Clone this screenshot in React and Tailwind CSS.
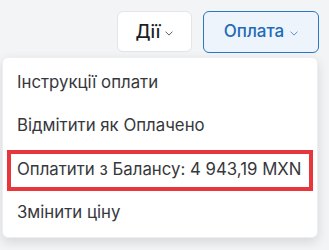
import React from "react";

function Chevron({ className }) {
  return (
    <svg viewBox="0 0 10 6" width="8" height="5" className={className} fill="none" stroke="currentColor" strokeWidth="1.2" strokeLinecap="round" strokeLinejoin="round">
      <path d="M1 1l4 4 4-4" />
    </svg>
  );
}

export default function App() {
  const items = [
    "Інструкції оплати",
    "Відмітити як Оплачено",
    "Оплатити з Балансу: 4 943,19 MXN",
    "Змінити ціну",
  ];
  return (
    <div className="w-[329px] h-[250px] overflow-hidden bg-[#f3f4f6] relative" style={{ fontFamily: "Inter, 'Noto Sans', sans-serif" }}>
      <div className="flex justify-end gap-[11px] pt-[11px] pr-[10px]">
        <button className="h-[41px] w-[75px] flex items-center justify-center gap-[5px] rounded-[6px] border border-[#e3e5e8] bg-white text-[18px] font-medium text-[#1d1f23]">
          <span>Дії</span>
          <Chevron className="text-[#555] mt-[3px]" />
        </button>
        <button className="h-[42px] w-[116px] flex items-center justify-center gap-[6px] rounded-[6px] border-[1.5px] border-[#2a78c4] bg-[#eef4fb] text-[17px] font-medium text-[#1e6bb8]">
          <span>Оплата</span>
          <Chevron className="text-[#5a8cc4] mt-[3px]" />
        </button>
      </div>
      <div className="absolute left-[2px] top-[57px] w-[316px] rounded-[6px] bg-white pt-[3px] pb-[4px] shadow-[0_4px_12px_rgba(0,0,0,0.12)] border border-[#eceef1]">
        {items.map((t, i) => (
          <div key={i} className="h-[43px] flex items-center">
            {i === 2 ? (
              <div className="mx-[4px] mt-[3px] h-[41px] w-full flex items-center border-[4px] border-[#e8373c] pl-[6px] text-[16.8px] text-[#36383c]">
                {t}
              </div>
            ) : (
              <div className={`pl-[14px] text-[16.8px] text-[#36383c] ${i === 3 ? "mt-[2px]" : ""}`}>{t}</div>
            )}
          </div>
        ))}
      </div>
    </div>
  );
}
